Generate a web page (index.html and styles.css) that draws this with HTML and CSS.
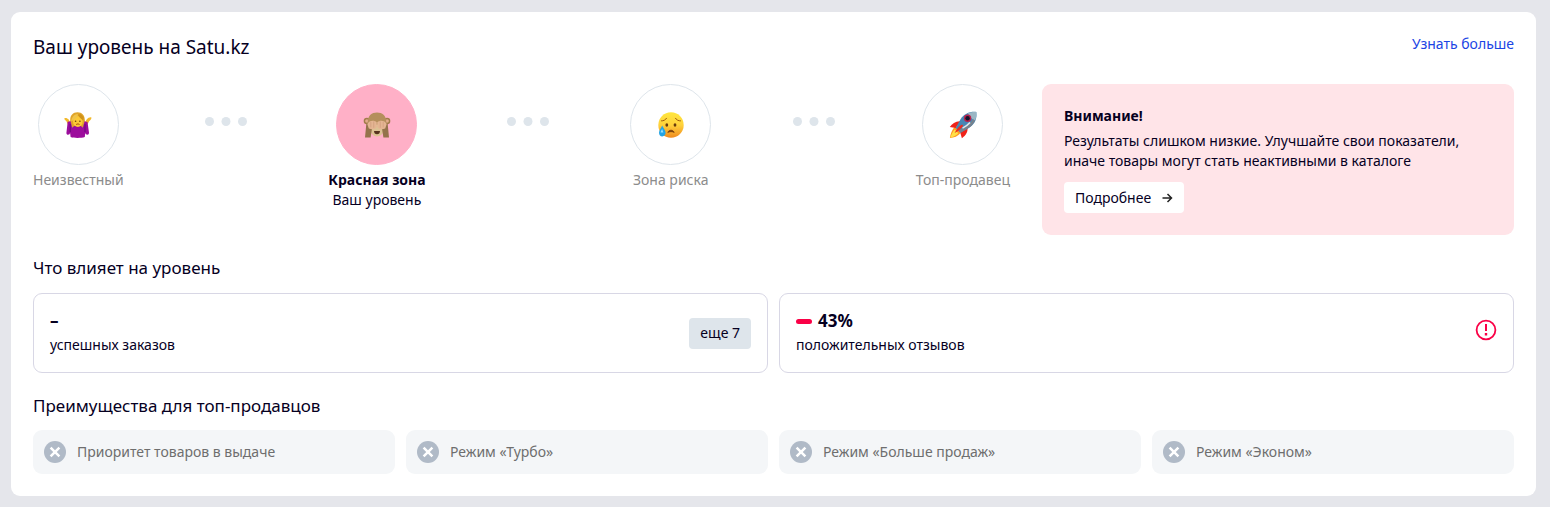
FILE: index.html
```html
<!DOCTYPE html>
<html lang="ru">
<head>
<meta charset="UTF-8">
<meta name="viewport" content="width=device-width, initial-scale=1.0">
<title>Ваш уровень на Satu.kz</title>
<link rel="stylesheet" href="styles.css">
</head>
<body>
    <main class="card">
        <!-- Header -->
        <header class="card-header">
            <h1>Ваш уровень на Satu.kz</h1>
            <a class="more-link" href="#">Узнать больше</a>
        </header>

        <!-- Current level -->
        <div class="status">
            <div class="levels">
                <div class="level">
                    <div class="level-icon">
                        <svg width="28" height="28" viewBox="0 0 28 28">
                            <path d="M13.500 1.200c-4.600 0-7.300 3.300-7.300 7.600 0 3.400-.6 5.400.4 7.700h13.800c1-2.300.4-4.300.4-7.700 0-4.300-2.700-7.600-7.300-7.600z" fill="#e0a52a"/>
                            <path d="M.4 7.200c1.600-.5 3.200.2 4.300 1.300l1.500 2.800-2.300 2.200-1.500-3.200C1.500 9.300.2 8.500.4 7.200zM27.400 6.400c-1.700-.4-3.400.7-4.600 1.900l-1.700 3 2.400 2.200 1.700-3.500c1-.8 2.600-2.200 2.200-3.600z" fill="#f2b92b"/>
                            <path d="M3.700 10.800l2.900-.6 1.500 6.200 3-1.900h4.800l3 1.900 1.700-6.200 2.900.7 1.500 10.800c0 2-1.400 2.500-3.200 1.500l-.6-1.300-.4 4.100c-3.800 1.200-10.800 1.200-14.200 0l-.5-4.100-.6 1.300c-1.500 1-3.100.4-3.100-1.300z" fill="#9c0c9c"/>
                            <path d="M6.200 13v8M21 13v8" stroke="#650b79"/>
                            <ellipse cx="13.800" cy="10.500" rx="4.800" ry="5.400" fill="#fcc937"/>
                            <path d="M7.200 10.500c.3-5 4-7.800 7-7-1 3.200-3.700 5.200-7 7z" fill="#efc34b"/>
                            <path d="M14 3.600c.4 2.100 2.400 3.800 5.300 6l.3-3.400-2.600-3z" fill="#cf921a"/>
                            <circle cx="11.600" cy="10.300" r=".8" fill="#65400a"/>
                            <circle cx="15.900" cy="10.300" r=".8" fill="#65400a"/>
                            <path d="M12.200 13.500c1-.7 2.400-.7 3.300 0" fill="none" stroke="#a54708"/>
                        </svg>
                    </div>
                    <p class="level-name">Неизвестный</p>
                </div>
                <svg class="dots" width="42" height="9" viewBox="0 0 42 9"><circle cx="4.500" cy="4.500" r="4.500"/><circle cx="21" cy="4.500" r="4.500"/><circle cx="37.500" cy="4.500" r="4.500"/></svg>
                <div class="level level-current">
                    <div class="level-icon">
                        <svg width="28" height="28" viewBox="0 0 28 28">
                            <circle cx="3.900" cy="10" r="3.200" fill="#a17c4a"/>
                            <circle cx="24.100" cy="10" r="3.200" fill="#a17c4a"/>
                            <circle cx="3.900" cy="10" r="1.800" fill="#e3ab8c"/>
                            <circle cx="24.100" cy="10" r="1.800" fill="#e3ab8c"/>
                            <path d="M14 1.500c-5.500 0-8.900 3.400-9.200 8.500v9.500h18.400V10C22.900 4.900 19.500 1.500 14 1.500z" fill="#b58f5c"/>
                            <ellipse cx="14" cy="19.500" rx="6.300" ry="6" fill="#dcc294"/>
                            <path d="M11 20h6c0 2-1.200 3.300-3 3.300s-3-1.300-3-3.300z" fill="#57331e"/>
                            <path d="M3.300 13L2 26.500h5.600l1.300-8.300-2.700-5.500zM24.700 13L26 26.500h-5.600l-1.300-8.300 2.700-5.500z" fill="#94734b"/>
                            <path d="M13.700 11.200C11 8.600 6 9.400 4.300 13l1.500 4.500c3.700 1.400 7.400.7 7.900-1.800zM14.300 11.200c2.700-2.600 7.700-1.800 9.400 1.800l-1.500 4.500c-3.700 1.400-7.400.7-7.900-1.800z" fill="#e4b592"/>
                            <path d="M7.800 10.800v5.600M10.700 10.400v6.300M17.300 10.400v6.300M20.200 10.800v5.600" stroke="#d09c7c" stroke-width=".7"/>
                        </svg>
                    </div>
                    <p class="level-name">Красная зона</p>
                    <p>Ваш уровень</p>
                </div>
                <svg class="dots" width="42" height="9" viewBox="0 0 42 9"><circle cx="4.500" cy="4.500" r="4.500"/><circle cx="21" cy="4.500" r="4.500"/><circle cx="37.500" cy="4.500" r="4.500"/></svg>
                <div class="level">
                    <div class="level-icon">
                        <svg width="28" height="28" viewBox="0 0 28 28">
                            <defs>
                                <linearGradient id="face" x2="0" y2="1">
                                    <stop offset="0" stop-color="#ffe63d"/>
                                    <stop offset=".5" stop-color="#ffd23c"/>
                                    <stop offset="1" stop-color="#f08a1e"/>
                                </linearGradient>
                            </defs>
                            <circle cx="14" cy="14" r="12.700" fill="url(#face)"/>
                            <path d="M4.500 9.900c1.900.1 4.100-1 5-2.600M18.500 7.300c.9 1.600 3.100 2.700 5 2.600" fill="none" stroke="#9f5b0b" stroke-linecap="round"/>
                            <ellipse cx="9.800" cy="14" rx="1.400" ry="1.800" fill="#683b0b"/>
                            <ellipse cx="18" cy="14" rx="1.400" ry="1.800" fill="#683b0b"/>
                            <path d="M10.800 21.300c1.500-2.700 4.900-2.700 6.400 0-2-.9-4.400-.9-6.400 0z" fill="#7d410b" stroke="#7d410b" stroke-linejoin="round"/>
                            <path d="M5.200 14.600C4 17.500 2 19.300 2 21.700c0 2.200 1.400 3.700 3.300 3.700s3.300-1.500 3.300-3.600c0-2.400-2.200-4.300-3.400-7.200z" fill="#25a5e6"/>
                            <path d="M5.100 18c-.7 1.700-1.500 2.400-1.500 3.500h2.800z" fill="#96e2ff"/>
                        </svg>
                    </div>
                    <p class="level-name">Зона риска</p>
                </div>
                <svg class="dots" width="42" height="9" viewBox="0 0 42 9"><circle cx="4.500" cy="4.500" r="4.500"/><circle cx="21" cy="4.500" r="4.500"/><circle cx="37.500" cy="4.500" r="4.500"/></svg>
                <div class="level">
                    <div class="level-icon">
                        <svg width="28" height="28" viewBox="0 0 28 28">
                            <path d="M6.300 15.500C4 17.200 1.600 22 .9 26.900c4-.2 8.200-1.800 10.700-5z" fill="#ff9a20"/>
                            <path d="M5.800 18.500C4 20.200 2 24 1.400 26.400c2.900-.4 6-1.900 7.900-4.200z" fill="#ffe147"/>
                            <path d="M11.700 10.300c-4.700-.5-8.400 2-10.900 5.800l6 .8zM18.400 16c.8 4.800-1.500 8.400-5.500 11.200l-1.700-5.700z" fill="#ef2219"/>
                            <path d="M27.300.9c-7-.5-12.300 2-15.900 7.500L6.700 17l4.800 4.700 8.200-4.600C25.400 13.200 28.300 8.300 27.300.9z" fill="#4886b4"/>
                            <path d="M27.300.9c-3.200-.1-6 .4-8.400 1.400 1.500 3.700 3.600 5.900 7.100 7.200 1.200-2.500 1.500-5.400 1.300-8.600z" fill="#9ab6c4"/>
                            <path d="M26 9.500c-1.200 2.900-3.300 5.500-6.300 7.600l-8.200 4.600-2.300-2.300C15.300 17.200 20.800 13 24 8.300z" fill="#76828e"/>
                            <path d="M21 11.500c-2 2.300-4.500 4.200-7.500 5.600" fill="none" stroke="#dfe8ee" stroke-width="1.600"/>
                            <circle cx="18.600" cy="7.300" r="3.700" fill="#b9204c"/>
                            <circle cx="18.600" cy="7.300" r="2.200" fill="#16152d"/>
                            <path d="M13.100 13.500c-2.600 1.300-5.700 4.400-7.500 8.600 3.800-1.800 6.900-4.600 8.500-7.300z" fill="#ee2b20"/>
                        </svg>
                    </div>
                    <p class="level-name">Топ-продавец</p>
                </div>
            </div>

            <section class="alert">
                <h2>Внимание!</h2>
                <p>Результаты слишком низкие. Улучшайте свои показатели, иначе товары могут стать неактивными в каталоге</p>
                <button class="btn btn-white">
                    Подробнее
                    <svg width="11" height="10" viewBox="0 0 11 10" fill="none" stroke="#222" stroke-width="1.500"><path d="M.5 5h9M5.500 1l4 4-4 4"/></svg>
                </button>
            </section>
        </div>

        <!-- Factors -->
        <section class="factors">
            <h2>Что влияет на уровень</h2>
            <div class="factor-list">
                <div class="factor">
                    <div>
                        <p class="factor-value">–</p>
                        <p>успешных заказов</p>
                    </div>
                    <button class="btn btn-grey">еще 7</button>
                </div>
                <div class="factor">
                    <div>
                        <p class="factor-value"><span class="bar"></span>43%</p>
                        <p>положительных отзывов</p>
                    </div>
                    <svg class="warning" width="22" height="22" viewBox="0 0 22 22">
                        <circle cx="11" cy="11" r="9.400" fill="none" stroke="#fa0046" stroke-width="1.800"/>
                        <path d="M10 5h2v7h-2zM9.800 14h2.400v2.500H9.800z" fill="#fa0046"/>
                    </svg>
                </div>
            </div>
        </section>

        <!-- Benefits -->
        <section class="benefits">
            <h2>Преимущества для топ-продавцов</h2>
            <ul class="benefit-list">
                <li>
                    <svg width="22" height="22" viewBox="0 0 22 22"><circle cx="11" cy="11" r="11"/><path d="M6.600 6.600l8.800 8.800M15.400 6.600l-8.800 8.800"/></svg>
                    Приоритет товаров в выдаче
                </li>
                <li>
                    <svg width="22" height="22" viewBox="0 0 22 22"><circle cx="11" cy="11" r="11"/><path d="M6.600 6.600l8.800 8.800M15.400 6.600l-8.800 8.800"/></svg>
                    Режим «Турбо»
                </li>
                <li>
                    <svg width="22" height="22" viewBox="0 0 22 22"><circle cx="11" cy="11" r="11"/><path d="M6.600 6.600l8.800 8.800M15.400 6.600l-8.800 8.800"/></svg>
                    Режим «Больше продаж»
                </li>
                <li>
                    <svg width="22" height="22" viewBox="0 0 22 22"><circle cx="11" cy="11" r="11"/><path d="M6.600 6.600l8.800 8.800M15.400 6.600l-8.800 8.800"/></svg>
                    Режим «Эконом»
                </li>
            </ul>
        </section>
    </main>
</body>
</html>
```

FILE: styles.css
```css
/* General Styles */
* {
    margin: 0;
    padding: 0;
    box-sizing: border-box;
}

body {
    padding: 12px 14px 11px 11px;
    background: #e5e6eb;
    color: #06001f;
    font-family: 'Noto Sans', sans-serif;
    font-size: 14px;
    line-height: 20px;
}

h1,
h2 {
    font-weight: 400;
}

h2 {
    font-size: 17px;
    line-height: 22px;
}

svg {
    display: block;
    flex-shrink: 0;
}

.card {
    padding: 22px;
    border-radius: 9px;
    background: #fff;
}

/* Header */
.card-header {
    display: flex;
    justify-content: space-between;
    align-items: flex-start;
    margin-bottom: 24px;
}

.card-header h1 {
    font-size: 19px;
    line-height: 26px;
}

.more-link {
    color: #1b45e4;
    text-decoration: none;
}

/* Levels */
.status {
    display: grid;
    grid-template-columns: 977fr 472fr;
    gap: 32px;
}

.levels {
    display: flex;
    justify-content: space-between;
    align-items: flex-start;
}

.level {
    display: flex;
    flex-direction: column;
    align-items: center;
}

.level-icon {
    display: flex;
    justify-content: center;
    align-items: center;
    width: 81px;
    height: 81px;
    margin-bottom: 5px;
    border: 1px solid #dee5eb;
    border-radius: 50%;
}

.level-name {
    color: #8c8c8c;
}

.level-current .level-icon {
    border-color: #ffb0c7;
    background: #ffb0c7;
}

.level-current .level-name {
    color: inherit;
    font-weight: 700;
}

.dots {
    margin-top: 33px;
    fill: #dee5eb;
}

/* Alert */
.alert {
    padding: 22px;
    border-radius: 9px;
    background: #ffe4e8;
}

.alert h2 {
    margin-bottom: 5px;
    font-size: 14px;
    font-weight: 700;
    line-height: 20px;
}

.alert p {
    margin-bottom: 11px;
}

.btn {
    display: flex;
    align-items: center;
    gap: 11px;
    height: 31px;
    padding: 0 11px;
    border: none;
    border-radius: 4px;
    color: inherit;
    font: inherit;
    cursor: pointer;
}

.btn-white {
    background: #fff;
}

.btn-grey {
    background: #dee5eb;
}

/* Factors */
.factors {
    margin-top: 22px;
}

.factor-list {
    display: grid;
    grid-template-columns: 1fr 1fr;
    gap: 11px;
    margin-top: 14px;
}

.factor {
    display: flex;
    justify-content: space-between;
    align-items: center;
    padding: 17px 16px;
    border: 1px solid #d8d7e5;
    border-radius: 9px;
}

.factor-value {
    display: flex;
    align-items: center;
    gap: 6px;
    margin-bottom: 4px;
    font-size: 17px;
    font-weight: 700;
    line-height: 20px;
}

.bar {
    width: 16px;
    height: 5px;
    border-radius: 3px;
    background: #fa0046;
}

.warning {
    align-self: flex-start;
    margin-top: 8px;
}

/* Benefits */
.benefits {
    margin-top: 22px;
}

.benefit-list {
    display: grid;
    grid-template-columns: repeat(4, 1fr);
    gap: 11px;
    margin-top: 13px;
    list-style: none;
}

.benefit-list li {
    display: flex;
    align-items: center;
    gap: 11px;
    padding: 11px;
    border-radius: 9px;
    background: #f4f6f8;
    color: #6e6e6e;
}

.benefit-list svg {
    fill: #b0bac7;
    stroke-width: 2.5;
}

.benefit-list path {
    stroke: #fff;
}
```
